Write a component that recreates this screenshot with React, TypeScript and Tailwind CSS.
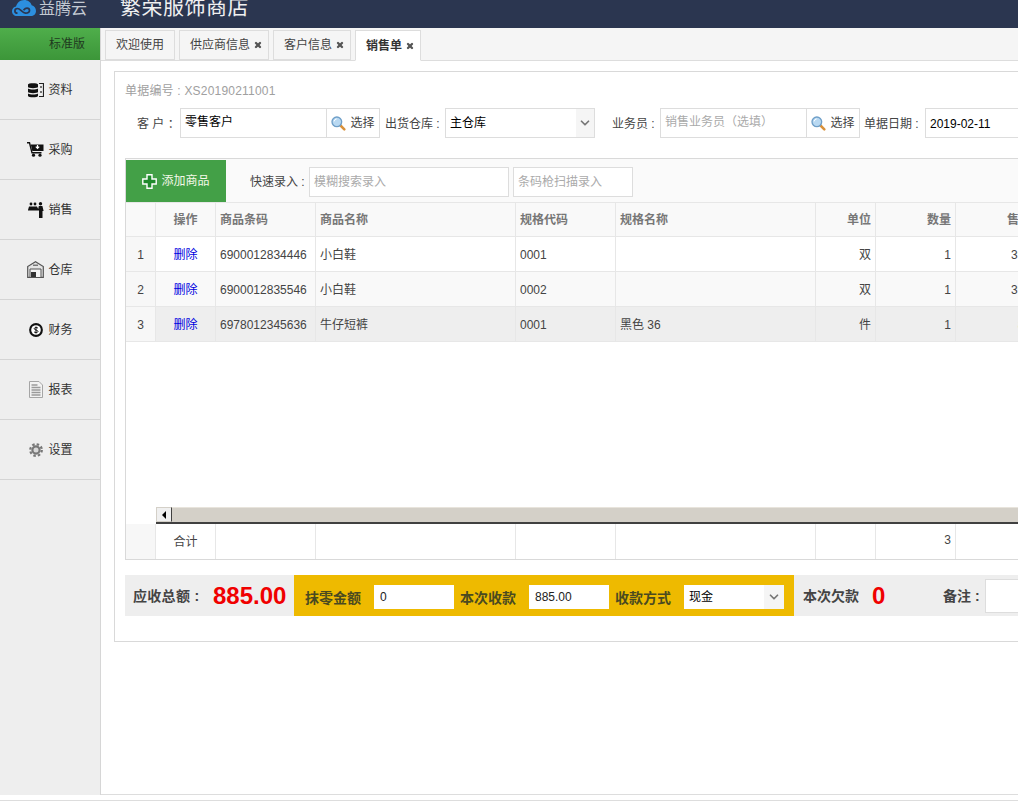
import React from 'react';
import { ChevronDown, X } from 'lucide-react';

const FONT = 'font-["Liberation_Sans","Noto_Sans_CJK_SC",sans-serif]';

const Search = () => (
  <svg width="15" height="15" viewBox="0 0 18 18" className="shrink-0">
    <line x1="10.5" y1="10.5" x2="16" y2="16" stroke="#d9913a" strokeWidth="3" strokeLinecap="round" />
    <circle cx="7" cy="7" r="5.8" fill="#b9d9f2" stroke="#6f9fc8" strokeWidth="1.6" />
    <path d="M3.8 6.5a3.4 3.4 0 0 1 3-3" fill="none" stroke="#fff" strokeWidth="1.2" />
  </svg>
);

const DataIcon = () => (
  <svg width="16" height="16" viewBox="0 0 16 16">
    <path d="M0 2.5C0 .8 10 .8 10 2.500V5C10 6.500 0 6.500 0 5zM0 6.500c2 1.300 8 1.300 10 0V10C10 11.500 0 11.500 0 10zM0 11.500c2 1.300 8 1.300 10 0V14C10 15.800 0 15.800 0 14z" fill="#111" />
    <path d="M11 1.500h4.500v13H11M13 4v2M13 9v2" fill="none" stroke="#222" strokeWidth="1.200" />
  </svg>
);

const CartIcon = () => (
  <svg width="17" height="15" viewBox="0 0 17 15">
    <path d="M0 .8h2.500l2.500 10h9.500" fill="none" stroke="#111" strokeWidth="1.400" />
    <path d="M3.800 2.500h12.700V9H5.300z" fill="#111" />
    <path d="M10.500 3v3M8.800 4.700l1.700 1.800 1.700-1.800" fill="none" stroke="#fff" strokeWidth="1.200" />
    <circle cx="6.500" cy="13.200" r="1.600" fill="#111" />
    <circle cx="13" cy="13.200" r="1.600" fill="#111" />
  </svg>
);

const SaleIcon = () => (
  <svg width="16" height="16" viewBox="0 0 16 16">
    <circle cx="3" cy="2" r="1.400" fill="#111" />
    <circle cx="7" cy="2" r="1.400" fill="#111" />
    <circle cx="12.500" cy="1.800" r="1.700" fill="#111" />
    <path d="M0 8l1-3.500h8L10.200 7l.6-3h3.600l1.100 4.500v.5H14.500V16h-3.500V8.500H0z" fill="#111" />
  </svg>
);

const StoreIcon = () => (
  <svg width="17" height="17" viewBox="0 0 17 17">
    <path d="M.7 16.300V5.500L8.500.8l7.800 4.700v10.800z" fill="#e4e4e4" stroke="#555" strokeWidth="1.200" />
    <path d="M3 16V8h11v8" fill="#f4f4f4" stroke="#555" strokeWidth="1" />
    <rect x="4" y="11" width="5" height="5" fill="#333" />
    <rect x="6" y="3.500" width="5" height="1.500" fill="#777" />
  </svg>
);

const MoneyIcon = () => (
  <svg width="14" height="14" viewBox="0 0 14 14">
    <circle cx="7" cy="7" r="6.900" fill="#111" />
    <circle cx="7" cy="7" r="4.800" fill="#fff" />
    <path d="M9 5.200C8.500 4.300 5.200 4.200 5.200 5.700S9 6.900 9 8.400 5.500 9.800 5 8.800M7 3.500v7" fill="none" stroke="#111" strokeWidth="1" />
  </svg>
);

const ReportIcon = () => (
  <svg width="14" height="17" viewBox="0 0 14 17">
    <path d="M.5.500h9.500l3.500 3.500v12.500H.5z" fill="#f2f2f2" stroke="#a5a5a5" />
    <path d="M2.500 4h6M2.500 6.500h9M2.500 9h9M2.500 11.500h9M2.500 14h9" stroke="#9a9a9a" strokeWidth="1.300" />
  </svg>
);

const GearIcon = () => (
  <svg width="14" height="14" viewBox="0 0 14 14">
    <circle cx="7" cy="7" r="5.800" fill="none" stroke="#777" strokeWidth="2.200" strokeDasharray="2.500 2.050" />
    <circle cx="7" cy="7" r="3.600" fill="#d8d8d8" stroke="#777" strokeWidth="2.200" />
  </svg>
);

// two-lobed cloud with a dark swirl knocked out of the lower half
const LogoCloud = () => (
  <svg width="24" height="16" viewBox="0 0 24 16">
    <path d="M5 16C2 16 0 13.800 0 11.200 0 8.800 1.800 7 4 6.600 5 2.800 8.200 0 12.200 0c3.600 0 6.500 2.100 7.500 5.300 2.500.6 4.300 3 4.300 5.600 0 2.900-2.300 5.100-5.200 5.100z" fill="#2c8fdf" />
    <path d="M5.500 13.200c-1.500 0-2.600-1-2.600-2.300s1.100-2.400 2.600-2.400c2.800 0 4.800 4.600 8 4.600 2.300 0 4-1.100 4-2.600 0-1.400-1.200-2.400-2.500-2.400-1.600 0-2.700 1.100-3.500 2" fill="none" stroke="#2b3650" strokeWidth="1.700" />
  </svg>
);

const menu = [
  { label: '资料', icon: <DataIcon /> },
  { label: '采购', icon: <CartIcon /> },
  { label: '销售', icon: <SaleIcon /> },
  { label: '仓库', icon: <StoreIcon /> },
  { label: '财务', icon: <MoneyIcon /> },
  { label: '报表', icon: <ReportIcon /> },
  { label: '设置', icon: <GearIcon /> },
];

const tabs = [
  { label: '欢迎使用', w: 'w-[70px]', close: false, active: false },
  { label: '供应商信息', w: 'w-[90px]', close: true, active: false },
  { label: '客户信息', w: 'w-[78px]', close: true, active: false },
  { label: '销售单', w: 'w-[66px]', close: true, active: true },
];

const rows = [
  { no: 1, code: '6900012834446', name: '小白鞋', spec: '0001', specName: '', unit: '双', qty: 1, price: '399', bg: 'bg-white' },
  { no: 2, code: '6900012835546', name: '小白鞋', spec: '0002', specName: '', unit: '双', qty: 1, price: '399', bg: 'bg-[#f9f9f9]' },
  { no: 3, code: '6978012345636', name: '牛仔短裤', spec: '0001', specName: '黑色 36', unit: '件', qty: 1, price: '87', bg: 'bg-[#eeeeee]' },
];

const cols = 'grid grid-cols-[30px_60px_100px_200px_100px_200px_60px_80px_80px]';
const cell = 'flex items-center border-r border-[#e7e7e7] px-1';
const rowCell = 'flex items-center border-r border-[#e7e7e7] px-1 pt-[2px]';

const PickerField = ({ value, placeholder }: { value?: string; placeholder?: string }) => (
  <div className="flex h-[30px] w-[200px] items-stretch border border-[#dddddd] bg-white">
    <div className={`flex-1 px-1 text-[12px] leading-[27px] ${value ? 'text-black' : 'text-[#aaaaaa]'}`}>{value || placeholder}</div>
    <div className="flex w-[53px] items-center justify-center gap-[4px] border-l border-[#dddddd] text-[12px] text-[#444]">
      <Search />
      <span>选择</span>
    </div>
  </div>
);

export default function App() {
  return (
    <div className={`flex h-[801px] w-[1018px] flex-col overflow-hidden bg-white ${FONT}`}>
      {/* top bar */}
      <header className="flex h-[28px] shrink-0 items-start overflow-hidden bg-[#2b3650] pl-[12px]">
        <LogoCloud />
        <span className="ml-[3px] mt-[-2px] text-[16px] leading-[22px] text-[#c3c9d2]">益腾云</span>
        <span className="ml-[33px] mt-[-6px] text-[21px] leading-[26px] tracking-[0.5px] text-[#f0f0f0]">繁荣服饰商店</span>
      </header>

      <div className="flex min-h-0 flex-1">
        {/* sidebar */}
        <aside className="flex h-[767px] w-[101px] shrink-0 flex-col border-r border-[#d6d6d6] bg-[#eeeeee]">
          <div className="h-[32px] bg-gradient-to-b from-[#4fae4b] to-[#3c9639] pl-[49px] text-[12px] leading-[32px] text-[#1f3a1f]">
            标准版
          </div>
          {menu.map((m) => (
            <div key={m.label} className="flex h-[60px] items-center justify-center gap-[4px] border-b border-[#d4d4d4] text-[12px] text-[#333]">
              <span className="flex w-[17px] justify-center">{m.icon}</span>
              <span>{m.label}</span>
            </div>
          ))}
        </aside>

        <main className="flex h-[767px] min-w-0 flex-1 flex-col overflow-hidden border-b border-[#dddddd]">
          {/* tabs */}
          <div className="flex h-[33px] shrink-0 items-end gap-[4px] border-b border-[#dddddd] bg-[#f5f5f5] pl-[4px]">
            {tabs.map((t) => (
              <div
                key={t.label}
                className={`flex items-center gap-[4px] border border-[#dddddd] pl-[10px] text-[12px] ${t.w} ${
                  t.active ? 'mb-[-1px] h-[31px] border-b-white bg-white font-bold text-[#333]' : 'h-[30px] bg-[#f5f5f5] text-[#444]'
                }`}
              >
                <span>{t.label}</span>
                {t.close && <X className="h-[8px] w-[8px] text-[#555]" strokeWidth={7} />}
              </div>
            ))}
          </div>

          {/* form panel */}
          <section className="ml-[13px] mt-[10px] h-[571px] w-[1000px] shrink-0 border border-[#d9d9d9] pl-[10px] pt-[10px]">
            <div className="text-[12px] leading-[18px] tracking-[0.2px] text-[#a0a0a0]">单据编号 : XS20190211001</div>

            <div className="mt-[8px] flex h-[30px] items-center whitespace-nowrap text-[12px] text-[#444]">
              <span className="ml-[12px] w-[43px] shrink-0 pt-[1px]">客 户 ：</span>
              <PickerField value="零售客户" />
              <span className="ml-[5px] w-[60px] shrink-0 pt-[1px]">出货仓库 :</span>
              <div className="flex h-[30px] w-[150px] shrink-0 items-center border border-[#dddddd] bg-white pl-1 text-black">
                <span className="flex-1 pb-[1px]">主仓库</span>
                <span className="flex h-full w-[18px] items-center justify-center bg-[#f5f5f5]">
                  <ChevronDown className="h-[14px] w-[14px] text-[#777]" strokeWidth={3} />
                </span>
              </div>
              <span className="ml-[17px] w-[48px] shrink-0 pt-[1px]">业务员 :</span>
              <PickerField placeholder="销售业务员（选填）" />
              <span className="ml-[4px] w-[61px] shrink-0 pt-[1px]">单据日期 :</span>
              <div className="flex h-[30px] w-[160px] shrink-0 items-center border border-[#dddddd] bg-white pl-1 pt-[1px] text-black">
                2019-02-11
              </div>
            </div>

            {/* goods table */}
            <div className="mt-[20px] h-[402px] w-[990px] overflow-hidden border border-[#d9d9d9]">
              <div className="flex h-[43px] items-start bg-[#fafafa]">
                <div className="mt-[1px] flex h-[42px] w-[100px] items-center justify-center gap-[4px] bg-[#43a047] text-[12px] text-[#f4f8e8]">
                  <svg width="15" height="15" viewBox="0 0 15 15">
                    <path d="M5 .8h5V5h4.200v5H10v4.200H5V10H.8V5H5z" fill="#1f8a2c" stroke="#fff" strokeWidth="1.400" />
                  </svg>
                  <span>添加商品</span>
                </div>
                <span className="ml-[24px] mt-[14px] w-[59px] text-[12px] text-[#444]">快速录入 :</span>
                <div className="mt-[8px] h-[30px] w-[200px] border border-[#dddddd] bg-white px-1 text-[12px] leading-[28px] text-[#aaaaaa]">模糊搜索录入</div>
                <div className="ml-[4px] mt-[8px] h-[30px] w-[120px] border border-[#dddddd] bg-white px-1 text-[12px] leading-[28px] text-[#aaaaaa]">条码枪扫描录入</div>
              </div>

              <div className={`${cols} h-[35px] border-y border-[#e7e7e7] bg-[#f9f9f9] text-[12px] font-bold text-[#777]`}>
                <div className={cell} />
                <div className={`${cell} justify-center`}>操作</div>
                <div className={cell}>商品条码</div>
                <div className={cell}>商品名称</div>
                <div className={cell}>规格代码</div>
                <div className={cell}>规格名称</div>
                <div className={`${cell} justify-end`}>单位</div>
                <div className={`${cell} justify-end`}>数量</div>
                <div className={`${cell} justify-end`}>售价</div>
              </div>

              {rows.map((r) => (
                <div key={r.no} className={`${cols} h-[35px] border-b border-[#e7e7e7] text-[12px] text-[#444] ${r.bg}`}>
                  <div className={`${rowCell} justify-center bg-[#f7f7f7]`}>{r.no}</div>
                  <div className={`${rowCell} justify-center text-[#0000e0]`}>删除</div>
                  <div className={rowCell}>{r.code}</div>
                  <div className={rowCell}>{r.name}</div>
                  <div className={rowCell}>{r.spec}</div>
                  <div className={rowCell}>{r.specName}</div>
                  <div className={`${rowCell} justify-end`}>{r.unit}</div>
                  <div className={`${rowCell} justify-end`}>{r.qty}</div>
                  <div className={`${rowCell} justify-end`}>{r.price}</div>
                </div>
              ))}

              {/* empty area + horizontal scrollbar */}
              <div className="h-[165px]" />
              <div className="h-[17px] pl-[30px]">
                <div className="flex h-[17px] border-b-2 border-[#404040]">
                  <div className="flex h-[15px] w-[16px] items-center justify-center border border-[#d4d0c8] border-r-[#404040] bg-[#f0f0f0]">
                    <span className="h-0 w-0 border-y-[4px] border-r-[4px] border-y-transparent border-r-black" />
                  </div>
                  <div className="flex-1 border-t border-[#e8e4dc] bg-[#d4d0c8]" />
                </div>
              </div>
              <div className={`${cols} h-[35px] text-[12px] text-[#444]`}>
                <div className={`${cell} bg-[#f7f7f7]`} />
                <div className={`${cell} justify-center`}>合计</div>
                <div className={cell} />
                <div className={cell} />
                <div className={cell} />
                <div className={cell} />
                <div className={cell} />
                <div className={`${cell} justify-end pb-1`}>3</div>
                <div className={cell} />
              </div>
            </div>

            {/* totals bar */}
            <div className="mt-[15px] flex h-[41px] w-[990px] items-center bg-[#eeeeee]">
              <span className="ml-[8px] w-[80px] pt-[1px] text-[14px] font-bold tracking-[0.3px] text-[#444]">应收总额 :</span>
              <span className="w-[81px] text-[24px] font-bold leading-none text-[#f00000]">885.00</span>
              <div className="flex h-[41px] w-[500px] items-center bg-[#eeba00] text-[14px] font-bold text-[#4a4a20]">
                <span className="ml-[11px] mt-[6px] w-[69px]">抹零金额</span>
                <div className="mt-[2px] h-[24px] w-[80px] bg-white pl-[6px] text-[12px] font-normal leading-[24px] text-[#222]">0</div>
                <span className="ml-[6px] mt-[6px] w-[69px]">本次收款</span>
                <div className="mt-[2px] h-[24px] w-[80px] bg-white pl-[6px] text-[12px] font-normal leading-[24px] text-[#222]">885.00</div>
                <span className="ml-[6px] mt-[6px] w-[69px]">收款方式</span>
                <div className="mt-[2px] flex h-[24px] w-[100px] items-center bg-white pl-[5px] text-[12px] font-normal text-black">
                  <span className="flex-1">现金</span>
                  <span className="flex h-full w-[20px] items-center justify-center bg-[#f5f5f5]">
                    <ChevronDown className="h-[14px] w-[14px] text-[#777]" strokeWidth={3} />
                  </span>
                </div>
              </div>
              <span className="ml-[9px] w-[69px] pt-[1px] text-[14px] font-bold text-[#444]">本次欠款</span>
              <span className="w-[71px] text-[24px] font-bold leading-none text-[#f00000]">0</span>
              <span className="w-[42px] pt-[1px] text-[14px] font-bold text-[#444]">备注 :</span>
              <div className="h-[34px] flex-1 border border-[#dddddd] bg-white" />
            </div>
          </section>
        </main>
      </div>
      <div className="h-[6px] shrink-0 border-b border-[#dddddd] bg-white" />
    </div>
  );
}
